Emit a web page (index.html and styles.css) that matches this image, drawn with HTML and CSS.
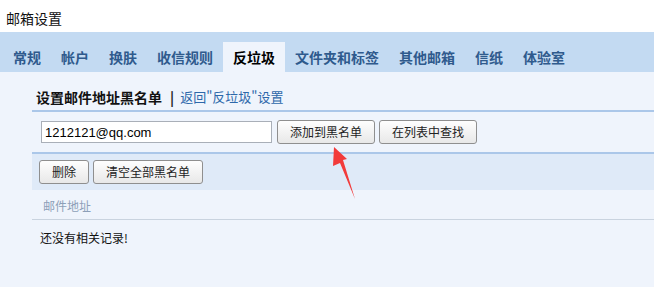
FILE: index.html
```html
<!DOCTYPE html>
<html lang="zh-CN">
<head>
<meta charset="utf-8">
<title>邮箱设置</title>
<link rel="stylesheet" href="styles.css">
</head>
<body>
  <div class="title">邮箱设置</div>
  <nav class="tabs">
    <a class="tab">常规</a>
    <a class="tab">帐户</a>
    <a class="tab">换肤</a>
    <a class="tab">收信规则</a>
    <a class="tab active">反垃圾</a>
    <a class="tab">文件夹和标签</a>
    <a class="tab">其他邮箱</a>
    <a class="tab">信纸</a>
    <a class="tab">体验室</a>
  </nav>
  <main class="content">
    <div class="panel">
      <div class="heading"><b>设置邮件地址黑名单</b><span class="sep">|</span><a class="back">返回"反垃圾"设置</a></div>
      <div class="addrow">
        <input class="addr" type="text" value="1212121@qq.com">
        <button class="btn">添加到黑名单</button>
        <button class="btn">在列表中查找</button>
      </div>
      <div class="toolbar">
        <button class="btn">删除</button>
        <button class="btn">清空全部黑名单</button>
      </div>
      <div class="colhead">邮件地址</div>
      <div class="empty">还没有相关记录!</div>
    </div>
  </main>
  <svg class="arrow" width="654" height="287" viewBox="0 0 654 287">
    <polygon points="334,147 347,159 343,160 355,199 340,163 333,166" fill="#f23b3b"/>
  </svg>
</body>
</html>
```
FILE: styles.css
```css
html, body {
  margin: 0;
  padding: 0;
}
body {
  position: relative;
  width: 654px;
  height: 287px;
  overflow: hidden;
  background: #eff4fc;
  font-family: "Noto Sans CJK SC", "Noto Sans", sans-serif;
  color: #000;
}
.title {
  background: #fff;
  height: 32px;
  box-sizing: border-box;
  padding: 4px 0 0 6px;
  line-height: 28px;
  font-size: 14px;
  color: #111;
}
.tabs {
  display: flex;
  align-items: flex-end;
  height: 40px;
  padding-left: 3px;
  background: #c3daf2;
}
.tab {
  height: 30px;
  line-height: 30px;
  padding: 0 10px;
  font-size: 14px;
  font-weight: 700;
  color: #2f5a8d;
}
.tab.active {
  background: #eff4fc;
  color: #000;
}
.content {
  padding-left: 32px;
}
.heading {
  padding: 15px 0 3px 4px;
  line-height: 20px;
  font-size: 14px;
  border-bottom: 2px solid #abc7e9;
  display: flex;
  align-items: center;
}
.heading b {
  font-weight: 700;
  color: #111;
}
.sep {
  font-weight: 700;
  margin: 0 6px 0 8px;
  color: #222;
}
.back {
  font-size: 13px;
  color: #2d68aa;
}
.addrow {
  height: 40px;
  display: flex;
  align-items: center;
  padding-left: 9px;
  border-bottom: 2px solid #abc7e9;
}
.addr {
  width: 231px;
  height: 22px;
  box-sizing: border-box;
  margin: 0 5px 0 0;
  padding: 0 0 0 3px;
  border: 1px solid #a9afb8;
  background: #fff;
  font-family: "Liberation Sans", Arial, sans-serif;
  font-size: 13px;
  color: #000;
  outline: none;
}
.btn {
  height: 24px;
  box-sizing: border-box;
  padding: 0 12px;
  margin: 0 4px 0 0;
  border: 1px solid #8f8f8f;
  border-radius: 3px;
  background: linear-gradient(#fefefe, #e8e8e8);
  font-family: "Noto Sans CJK SC", sans-serif;
  font-size: 12px;
  line-height: 22px;
  color: #222;
}
.toolbar {
  height: 36px;
  display: flex;
  align-items: center;
  padding-left: 7px;
  background: #dfeaf8;
}
.colhead {
  height: 29px;
  line-height: 32px;
  padding-left: 11px;
  font-size: 12px;
  color: #8d9fb8;
  border-bottom: 1px solid #c9d3df;
}
.empty {
  padding: 8px 0 0 8px;
  line-height: 20px;
  font-size: 12px;
  color: #111;
}
.arrow {
  position: absolute;
  left: 0;
  top: 0;
  pointer-events: none;
}
```
